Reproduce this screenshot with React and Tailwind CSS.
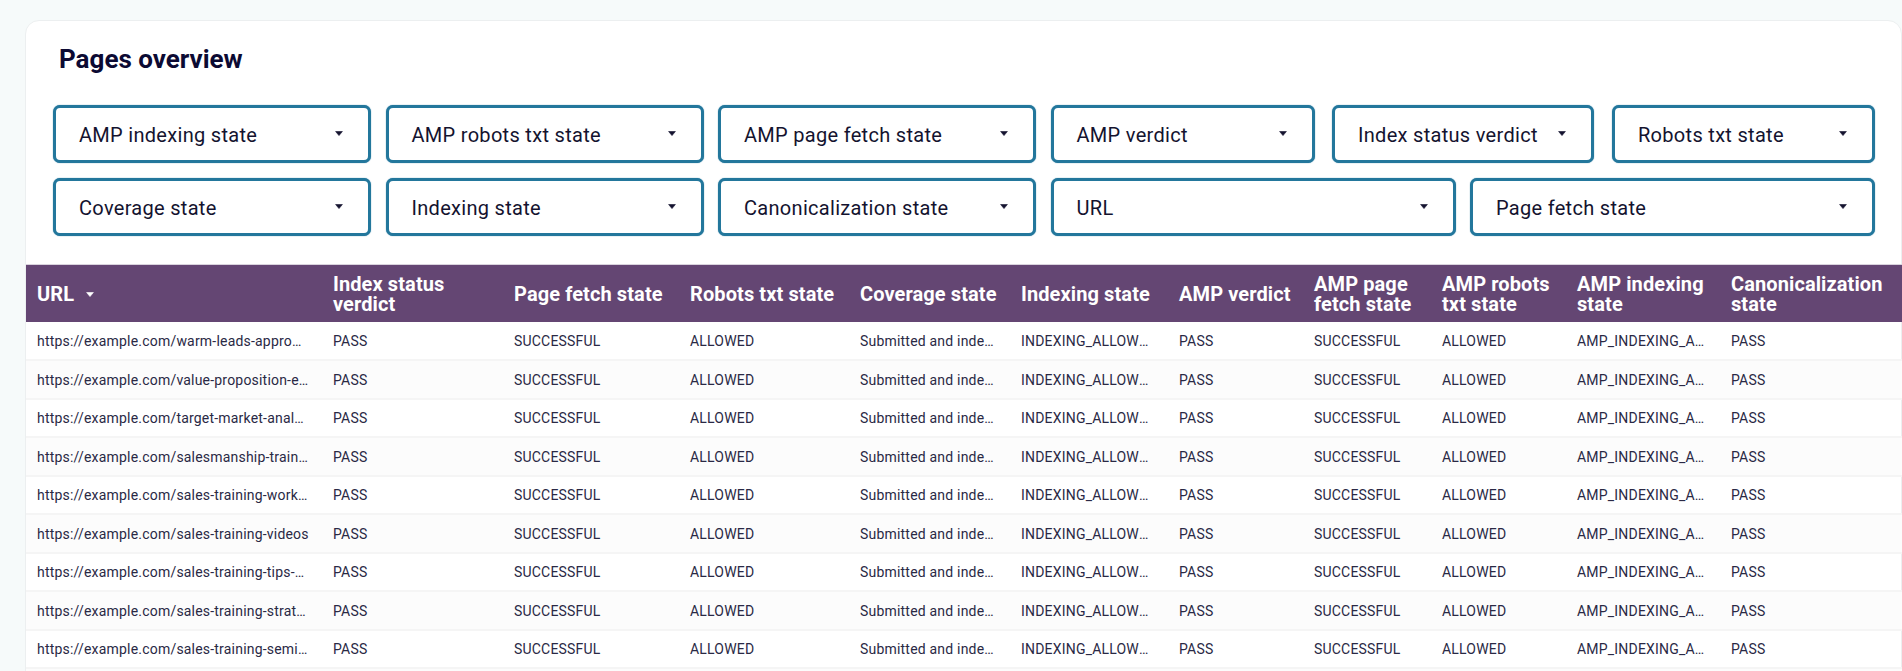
const rowOne = [
  { label: "AMP indexing state", width: "w-[318px]" },
  { label: "AMP robots txt state", width: "w-[318px]" },
  { label: "AMP page fetch state", width: "w-[318px]" },
  { label: "AMP verdict", width: "w-[264px]" },
  { label: "Index status verdict", width: "w-[262px] text-[#2a2a44]" },
  { label: "Robots txt state", width: "w-[263px]" },
];

const rowTwo = [
  { label: "Coverage state", width: "w-[318px]" },
  { label: "Indexing state", width: "w-[318px]" },
  { label: "Canonicalization state", width: "w-[318px]" },
  { label: "URL", width: "w-[405px]" },
  { label: "Page fetch state", width: "w-[405px]" },
];

const columns = [
  { label: "URL", width: "w-[296px]", sort: true },
  { label: "Index status verdict", width: "w-[181px]" },
  { label: "Page fetch state", width: "w-[176px]" },
  { label: "Robots txt state", width: "w-[170px]" },
  { label: "Coverage state", width: "w-[161px]" },
  { label: "Indexing state", width: "w-[158px]" },
  { label: "AMP verdict", width: "w-[135px]" },
  { label: "AMP page fetch state", width: "w-[128px]" },
  { label: "AMP robots txt state", width: "w-[135px]" },
  { label: "AMP indexing state", width: "w-[154px]" },
  { label: "Canonicalization state", width: "w-[182px]" },
];

const urls = [
  "warm-leads-approach-guide",
  "value-proposition-examples",
  "target-market-analysis-guide",
  "salesmanship-training-guide",
  "sales-training-workshops-guide",
  "sales-training-videos",
  "sales-training-tips-and-tricks",
  "sales-training-strategies-guide",
  "sales-training-seminars-guide",
  "sales-training-programs-guide",
];

const Caret = ({ className }) => (
  <svg viewBox="0 0 8 5" className={className} aria-hidden="true">
    <path d="M0.6 0.5h6.8L4 4.6z" fill="currentColor" stroke="currentColor" strokeWidth="0.6" strokeLinejoin="round" />
  </svg>
);

const Filter = ({ label, width }) => (
  <div className={`${width} h-[58px] shrink-0 flex items-center justify-between pl-[23px] pr-[25px] bg-white border-[3px] border-[#23779c] shadow-[0_0_1px_#23779c] rounded-[7px] text-[#14132f]`}>
    <span className="text-[20px] tracking-[0.3px] leading-none mt-[2px]">{label}</span>
    <Caret className="w-[8px] h-[5px] mb-[2px] text-[#14132f]" />
  </div>
);

const App = () => (
  <div className="h-[671px] overflow-hidden bg-[#f6fafa] pt-[20px] pl-[25px] font-['Roboto',sans-serif]">
    <div className="h-[700px] bg-white border border-[#eceff0] rounded-tl-[14px] rounded-tr-[14px]">
      <h2 className="pt-[22px] pl-[33px] text-[26px] leading-[32px] font-bold text-[#0c0a33]">Pages overview</h2>

      <div className="pt-[30px] pl-[27px] flex flex-col gap-[15px]">
        <div className="flex">
          <div className="flex gap-[14.5px]">
            {rowOne.slice(0, 4).map((f) => <Filter key={f.label} {...f} />)}
          </div>
          <div className="flex gap-[18px] ml-[17.5px]">
            {rowOne.slice(4).map((f) => <Filter key={f.label} {...f} />)}
          </div>
        </div>
        <div className="flex gap-[14.5px]">
          {rowTwo.map((f) => <Filter key={f.label} {...f} />)}
        </div>
      </div>

      <table className="mt-[28px] w-[1876px] table-fixed border-collapse">
        <thead>
          <tr className="h-[57px] bg-[#644673] text-white border-t border-[#d9d3dd]">
            {columns.map((c) => (
              <th key={c.label} className={`${c.width} pl-[11px] pr-[6px] pt-[2px] text-left align-middle text-[20px] tracking-[0.1px] leading-[20px] font-bold`}>
                {c.sort ? (
                  <span className="flex items-center gap-[12px]">
                    {c.label}
                    <Caret className="w-[8px] h-[5px] text-white" />
                  </span>
                ) : c.label}
              </th>
            ))}
          </tr>
        </thead>
        <tbody>
          {urls.map((u) => (
            <tr key={u} className="h-[38.5px] border-b-2 border-[#f5f5f5] even:bg-[#fcfcfc] text-[14px] tracking-[0.2px] text-[#2a2945]">
              <td className="pl-[11px] pr-[13px] pt-[2px] truncate">{`https://example.com/${u}`}</td>
              <td className="pl-[11px] pr-[14px] pt-[2px] truncate">PASS</td>
              <td className="pl-[11px] pr-[14px] pt-[2px] truncate">SUCCESSFUL</td>
              <td className="pl-[11px] pr-[14px] pt-[2px] truncate">ALLOWED</td>
              <td className="pl-[11px] pr-[14px] pt-[2px] truncate">Submitted and indexed</td>
              <td className="pl-[11px] pr-[14px] pt-[2px] truncate">INDEXING_ALLOWED</td>
              <td className="pl-[11px] pr-[14px] pt-[2px] truncate">PASS</td>
              <td className="pl-[11px] pr-[14px] pt-[2px] truncate">SUCCESSFUL</td>
              <td className="pl-[11px] pr-[14px] pt-[2px] truncate">ALLOWED</td>
              <td className="pl-[11px] pr-[14px] pt-[2px] truncate">AMP_INDEXING_ALLOWED</td>
              <td className="pl-[11px] pr-[14px] pt-[2px] truncate">PASS</td>
            </tr>
          ))}
        </tbody>
      </table>
    </div>
  </div>
);

export default App;
